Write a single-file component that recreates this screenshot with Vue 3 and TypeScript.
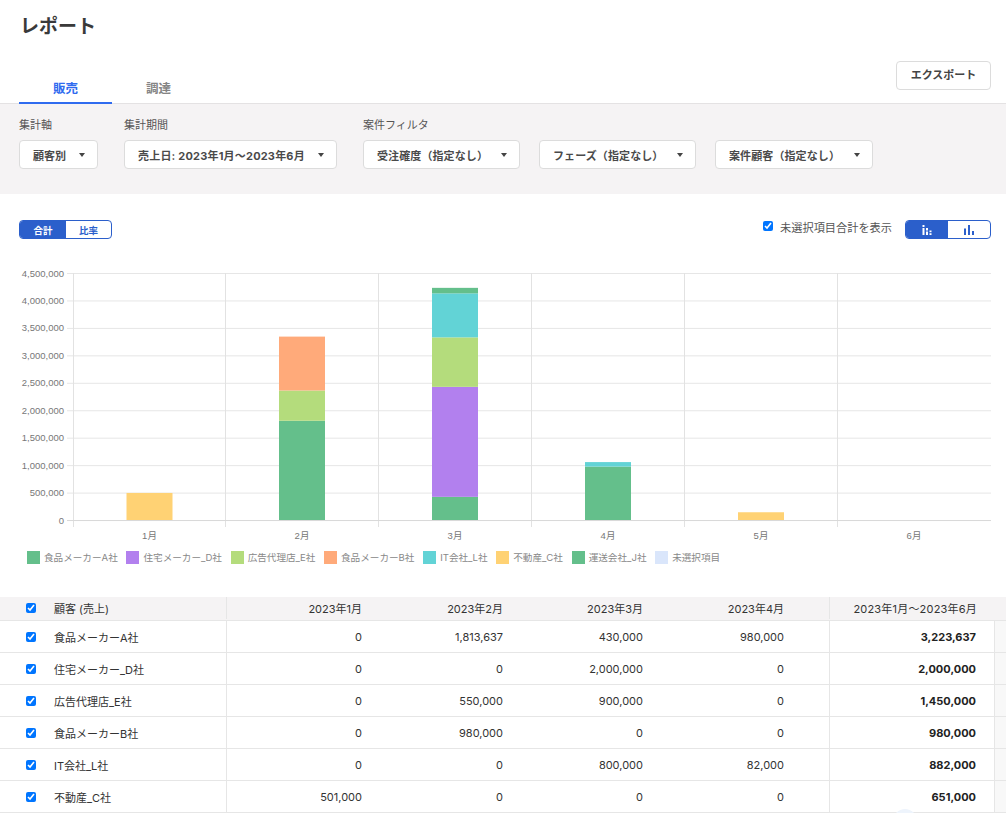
<script setup lang="ts">
interface Seg { value: number; color: string }
const green = '#64bf8b'
const purple = '#b280ee'
const lime = '#b4dc7c'
const orange = '#ffaa7a'
const teal = '#62d3d6'
const yellow = '#ffd274'
const top = 273
const bottom = 520.5
const scale = (bottom - top) / 4500000
const xs = [73.5, 225.5, 378.5, 531.5, 684.5, 837.5, 990.5]
const months = ['1月', '2月', '3月', '4月', '5月', '6月']
const yLabels = ['4,500,000', '4,000,000', '3,500,000', '3,000,000', '2,500,000', '2,000,000', '1,500,000', '1,000,000', '500,000', '0']
const stacks: Seg[][] = [
  [{ value: 501000, color: yellow }],
  [{ value: 1813637, color: green }, { value: 550000, color: lime }, { value: 980000, color: orange }],
  [{ value: 430000, color: green }, { value: 2000000, color: purple }, { value: 900000, color: lime }, { value: 800000, color: teal }, { value: 100000, color: green }],
  [{ value: 980000, color: green }, { value: 82000, color: teal }],
  [{ value: 150000, color: yellow }],
  []
]
const bars = stacks.flatMap((segs, i) => {
  let acc = 0
  const x = (xs[i] + xs[i + 1]) / 2 - 23
  return segs.map((s) => {
    const h = s.value * scale
    const y = bottom - acc * scale - h
    acc += s.value
    return { x, y, h, color: s.color }
  })
})
const legend = [
  { name: '食品メーカーA社', color: green },
  { name: '住宅メーカー_D社', color: purple },
  { name: '広告代理店_E社', color: lime },
  { name: '食品メーカーB社', color: orange },
  { name: 'IT会社_L社', color: teal },
  { name: '不動産_C社', color: yellow },
  { name: '運送会社_J社', color: green },
  { name: '未選択項目', color: '#dae6fb' }
]
const filters = ['受注確度（指定なし）', 'フェーズ（指定なし）', '案件顧客（指定なし）']
const heads = ['2023年1月', '2023年2月', '2023年3月', '2023年4月']
const rows = [
  { name: '食品メーカーA社', v: ['0', '1,813,637', '430,000', '980,000'], total: '3,223,637' },
  { name: '住宅メーカー_D社', v: ['0', '0', '2,000,000', '0'], total: '2,000,000' },
  { name: '広告代理店_E社', v: ['0', '550,000', '900,000', '0'], total: '1,450,000' },
  { name: '食品メーカーB社', v: ['0', '980,000', '0', '0'], total: '980,000' },
  { name: 'IT会社_L社', v: ['0', '0', '800,000', '82,000'], total: '882,000' },
  { name: '不動産_C社', v: ['501,000', '0', '0', '0'], total: '651,000' }
]
</script>

<template>
  <div class="page">
    <h1 class="title">レポート</h1>
    <div class="tabbar">
      <div class="tabs">
        <div class="tab active">販売</div>
        <div class="tab">調達</div>
      </div>
      <button class="export">エクスポート</button>
    </div>

    <section class="filters">
      <div class="group">
        <div class="label">集計軸</div>
        <div class="select s-axis">顧客別<i class="caret"></i></div>
      </div>
      <div class="group">
        <div class="label">集計期間</div>
        <div class="select s-period">売上日: 2023年1月〜2023年6月<i class="caret"></i></div>
      </div>
      <div class="group">
        <div class="label">案件フィルタ</div>
        <div class="select-row">
          <div v-for="f in filters" :key="f" class="select s-filter">{{ f }}<i class="caret"></i></div>
        </div>
      </div>
    </section>

    <div class="controls">
      <div class="seg seg-text">
        <span class="on">合計</span>
        <span>比率</span>
      </div>
      <div class="right">
        <label class="show"><input type="checkbox" checked />未選択項目合計を表示</label>
        <div class="seg seg-icon">
          <span class="on">
            <svg width="10" height="10" viewBox="0 0 10 10" fill="#fff">
              <rect x="0.5" y="0" width="2" height="2" />
              <rect x="0.5" y="3" width="2" height="7" />
              <rect x="4" y="3" width="2" height="2.5" />
              <rect x="4" y="6.5" width="2" height="3.5" />
              <rect x="7.5" y="5.5" width="2" height="1.7" />
              <rect x="7.5" y="8.2" width="2" height="1.8" />
            </svg>
          </span>
          <span>
            <svg width="10" height="10" viewBox="0 0 10 10" fill="#2b5fcb">
              <rect x="0" y="3.5" width="2" height="6.5" />
              <rect x="4" y="0" width="2" height="10" />
              <rect x="8" y="6" width="2" height="4" />
            </svg>
          </span>
        </div>
      </div>
    </div>

    <svg class="chart" width="1006" height="299" viewBox="0 250 1006 299">
      <line v-for="(l, i) in yLabels" :key="l" x1="67" x2="991" :y1="top + 0.5 + i * 27.45" :y2="top + 0.5 + i * 27.45" stroke="#e6e6e6" />
      <line v-for="x in xs.slice(0, 6)" :key="x" :x1="x" :x2="x" :y1="top" y2="527" stroke="#e2e2e2" />
      <rect v-for="(b, i) in bars" :key="i" :x="b.x" :y="b.y" width="46" :height="b.h" :fill="b.color" />
      <line x1="67" x2="991" y1="520.5" y2="520.5" stroke="#d9d9d9" />
      <text v-for="(l, i) in yLabels" :key="'y' + l" x="64" :y="top + 3.5 + i * 27.45" class="axis" text-anchor="end">{{ l }}</text>
      <text v-for="(m, i) in months" :key="m" :x="(xs[i] + xs[i + 1]) / 2" y="539" class="axis" text-anchor="middle">{{ m }}</text>
    </svg>

    <div class="legend">
      <div v-for="l in legend" :key="l.name" class="legend-item">
        <i :style="{ background: l.color }"></i>{{ l.name }}
      </div>
    </div>

    <div class="table">
      <div class="row head">
        <div class="cell check"><input type="checkbox" checked /></div>
        <div class="cell name">顧客 (売上)</div>
        <div v-for="h in heads" :key="h" class="cell num">{{ h }}</div>
        <div class="cell"></div>
        <div class="cell total">2023年1月〜2023年6月</div>
        <div class="cell"></div>
      </div>
      <div v-for="r in rows" :key="r.name" class="row">
        <div class="cell check"><input type="checkbox" checked /></div>
        <div class="cell name">{{ r.name }}</div>
        <div v-for="(v, i) in r.v" :key="i" class="cell num">{{ v }}</div>
        <div class="cell"></div>
        <div class="cell total">{{ r.total }}</div>
        <div class="cell scroll"></div>
      </div>
    </div>
    <div class="fab"></div>
  </div>
</template>

<style>
html, body { margin: 0; background: #fff; overflow: hidden; }
</style>

<style scoped>
.page {
  position: relative;
  width: 1006px;
  height: 813px;
  overflow: hidden;
  background: #fff;
  color: #333;
  font-family: Inter, "Noto Sans CJK JP", sans-serif;
}
.title {
  margin: 0;
  padding: 13px 0 0 20px;
  height: 48px;
  box-sizing: border-box;
  font-size: 19px;
  line-height: 28px;
  font-weight: 700;
  color: #3a3a3a;
}
.tabbar {
  height: 56px;
  box-sizing: border-box;
  border-bottom: 1px solid #e4e2e3;
  display: flex;
  justify-content: space-between;
  padding: 0 15px 0 19px;
}
.tabs { display: flex; align-items: flex-end; }
.tab {
  width: 93px;
  height: 31px;
  margin-bottom: -1px;
  box-sizing: border-box;
  text-align: center;
  font-size: 12.5px;
  line-height: 22px;
  padding-top: 5px;
  font-weight: 700;
  color: #858585;
}
.tab.active { color: #2f6bef; border-bottom: 2px solid #2f6bef; }
.export {
  margin-top: 13px;
  width: 95px;
  height: 29px;
  background: #fff;
  border: 1px solid #dcdcdc;
  border-radius: 4px;
  font: 700 11px/1 Inter, "Noto Sans CJK JP", sans-serif;
  color: #444;
  padding: 0;
}
.filters {
  height: 90px;
  box-sizing: border-box;
  background: #f5f3f4;
  padding: 13px 0 0 19px;
  display: flex;
  gap: 26px;
}
.label { font-size: 11px; line-height: 16px; color: #555; margin-bottom: 7px; }
.select-row { display: flex; gap: 19px; }
.select {
  height: 29px;
  box-sizing: border-box;
  background: #fff;
  border: 1px solid #dcdcdc;
  border-radius: 4px;
  display: flex;
  align-items: center;
  justify-content: space-between;
  padding: 0 12px 0 13px;
  font-size: 11px;
  font-weight: 700;
  color: #4a4a4a;
  white-space: nowrap;
}
.s-axis { width: 79px; }
.s-period { width: 213px; letter-spacing: 0.2px; }
.s-filter { min-width: 157px; letter-spacing: 0.1px; }
.s-filter:first-child { width: 157px; }
.s-filter:last-child { width: 158px; }
.caret {
  width: 0;
  height: 0;
  border-left: 3.75px solid transparent;
  border-right: 3.75px solid transparent;
  border-top: 4px solid #444;
}
.controls {
  height: 45px;
  box-sizing: border-box;
  padding: 26px 15px 0 19px;
  display: flex;
  justify-content: space-between;
  align-items: flex-start;
}
.right { display: flex; align-items: center; gap: 13px; }
.show {
  display: flex;
  align-items: center;
  font-size: 11.2px;
  color: #555;
  height: 19px;
  margin-top: -5px;
}
.show input { width: 10px; height: 10px; margin: 0 7px 0 0; position: relative; top: -1px; }
.seg {
  display: flex;
  height: 19px;
  box-sizing: border-box;
  border: 1px solid #2b5fcb;
  border-radius: 4px;
  overflow: hidden;
}
.seg span {
  display: flex;
  align-items: center;
  justify-content: center;
  font-size: 9.5px;
  font-weight: 700;
  color: #2b5fcb;
}
.seg span.on { background: #2b5fcb; color: #fff; }
.seg-text { width: 93px; }
.seg-text span { width: 46px; flex: none; }
.seg-text span:last-child { flex: 1; }
.seg-icon { width: 86px; }
.seg-icon span { flex: 1; }
.chart { display: block; margin-top: 11px; }
.legend {
  display: flex;
  padding-left: 27px;
  gap: 8.7px;
  height: 16px;
  font-size: 9.6px;
  color: #888;
  white-space: nowrap;
}
.legend-item { display: flex; align-items: center; }
.legend-item i { width: 13px; height: 13px; margin-right: 4px; flex: none; }
.table { margin-top: 32px; font-size: 11px; color: #333; }
.row {
  display: grid;
  grid-template-columns: 54px 173px 135px 141px 140px 141px 45px 166px 11px;
  height: 32px;
  box-sizing: border-box;
  border-bottom: 1px solid #e6e6e6;
}
.row.head { height: 24px; background: #f5f3f4; padding-bottom: 1px; }
.cell {
  display: flex;
  align-items: center;
  white-space: nowrap;
}
.check { justify-content: flex-start; padding-left: 26px; box-sizing: border-box; }
.check input { width: 10px; height: 10px; margin: 0; }
.name { border-right: 1px solid #e6e6e6; }
.num { justify-content: flex-end; }
.total {
  justify-content: flex-end;
  padding-right: 18px;
  font-weight: 700;
  color: #222;
  border-left: 1px solid #e6e6e6;
  border-right: 1px solid #e6e6e6;
}
.head .total { font-weight: 400; border-right: none; color: #333; letter-spacing: 0.2px; }
.scroll { background: #f8f8f8; }
.fab {
  position: absolute;
  left: 893px;
  top: 809px;
  width: 24px;
  height: 24px;
  border-radius: 50%;
  background: #eef4fc;
}
.axis {
  font-family: "Liberation Sans", "Noto Sans CJK JP", sans-serif;
  font-size: 9.5px;
  fill: #777;
}
</style>
